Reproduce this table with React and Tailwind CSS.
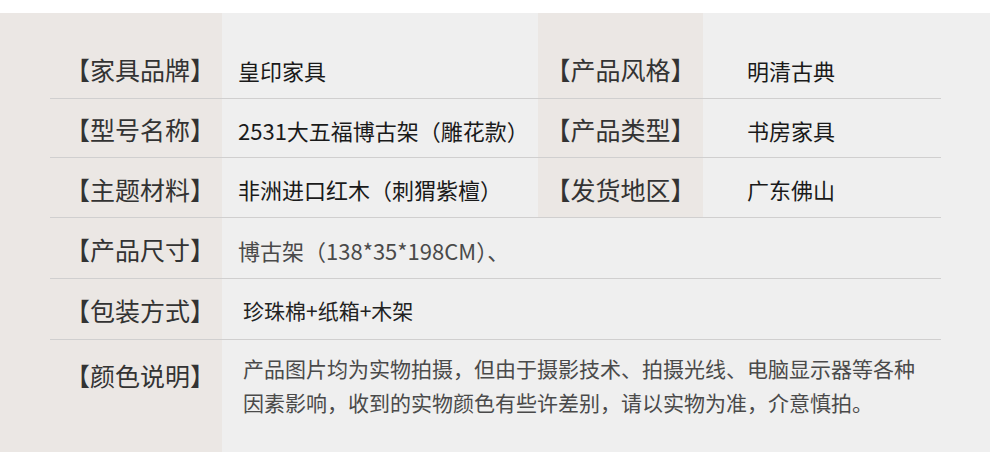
import React from "react";

const warm = "bg-[#ebe7e4]";

const Label = ({ children, className = "" }) => (
  <div className={`flex shrink-0 items-center text-[25px] text-[#333] leading-none pt-[3px] ${className}`}>
    {children}
  </div>
);

const App = () => {
  return (
    <div className="h-[466px] w-[990px] bg-white pt-[13px] font-['Noto_Sans_CJK_SC','Microsoft_YaHei',sans-serif]">
      <div className="flex h-[439px] bg-[#efefef]">
        <div className={`w-[50px] shrink-0 ${warm}`} />
        <div className="flex w-[891px] shrink-0 flex-col">
          {/* top padding */}
          <div className="flex h-[25px]">
            <div className={`w-[172px] ${warm}`} />
            <div className="w-[316px]" />
            <div className={`w-[165px] ${warm}`} />
          </div>

          {/* rows 1-3: two columns */}
          {[
            ["【家具品牌】", "皇印家具", "【产品风格】", "明清古典", "h-[61px]"],
            ["【型号名称】", "2531大五福博古架（雕花款）", "【产品类型】", "书房家具", "h-[59px]"],
            ["【主题材料】", "非洲进口红木（刺猬紫檀）", "【发货地区】", "广东佛山", "h-[60px]"],
          ].map(([l1, v1, l2, v2, h]) => (
            <div key={l1} className={`flex ${h} border-b border-[#d0cfcf]`}>
              <Label className={`w-[172px] justify-end pr-[7px] ${warm}`}>{l1}</Label>
              <div className="flex w-[316px] shrink-0 items-center whitespace-nowrap pl-[16px] pt-[3px] text-[22px] leading-none text-[#1a1a1a]">
                {v1}
              </div>
              <Label className={`w-[165px] justify-center ${warm}`}>{l2}</Label>
              <div className="flex w-[238px] shrink-0 items-center pl-[44px] pt-[3px] text-[22px] leading-none text-[#1a1a1a]">
                {v2}
              </div>
            </div>
          ))}

          {/* row 4 */}
          <div className="flex h-[61px] border-b border-[#d0cfcf]">
            <Label className={`w-[172px] justify-end pr-[7px] ${warm}`}>【产品尺寸】</Label>
            <div className="flex min-w-0 flex-1 items-center pl-[16px] pt-[3px] text-[22px] leading-none text-[#4a4a4a]">
              博古架（138*35*198CM）、
            </div>
          </div>

          {/* row 5 */}
          <div className="flex h-[61px] border-b border-[#d0cfcf]">
            <Label className={`w-[172px] justify-end pr-[7px] ${warm}`}>【包装方式】</Label>
            <div className="flex min-w-0 flex-1 items-center pl-[21px] pt-[3px] text-[21px] leading-none text-[#222]">
              珍珠棉+纸箱+木架
            </div>
          </div>

          {/* row 6 */}
          <div className="flex h-[112px]">
            <div className={`flex w-[172px] shrink-0 justify-end pr-[7px] pt-[23px] text-[25px] leading-none text-[#333] ${warm}`}>
              【颜色说明】
            </div>
            <div className="min-w-0 flex-1 whitespace-nowrap pl-[21px] pt-[11px] text-[21px] leading-[34px] text-[#4a4a4a]">
              产品图片均为实物拍摄，但由于摄影技术、拍摄光线、电脑显示器等各种
              <br />
              因素影响，收到的实物颜色有些许差别，请以实物为准，介意慎拍。
            </div>
          </div>
        </div>
        <div className="flex-1" />
      </div>
    </div>
  );
};

export default App;
